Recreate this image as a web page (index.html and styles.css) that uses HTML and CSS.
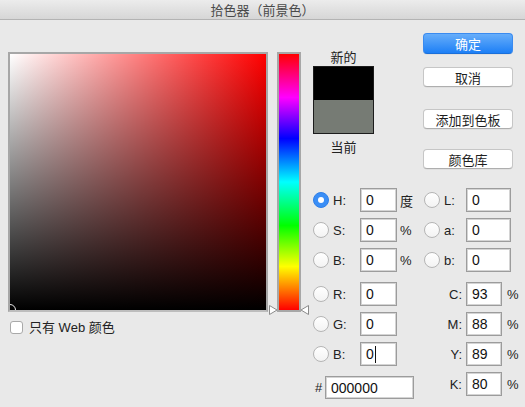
FILE: index.html
```html
<!DOCTYPE html>
<html lang="zh">
<head>
<meta charset="utf-8">
<title>拾色器（前景色）</title>
<link rel="stylesheet" href="styles.css">
</head>
<body>
<div class="window">
  <div class="titlebar">拾色器（前景色）</div>
  <div class="body">
    <div class="left">
      <div class="field"><span class="marker"></span></div>
      <div class="web"><span class="checkbox"></span><span>只有 Web 颜色</span></div>
    </div>
    <div class="hue">
      <div class="hue-bar"></div>
      <svg class="tri tri-l" width="9" height="10" viewBox="0 0 9 10"><path d="M0.5 0.5 L8 5 L0.5 9.5 Z" fill="#fff" stroke="#8a8a8a" stroke-width="1"/></svg>
      <svg class="tri tri-r" width="9" height="10" viewBox="0 0 9 10"><path d="M8.5 0.5 L1 5 L8.5 9.5 Z" fill="#fff" stroke="#8a8a8a" stroke-width="1"/></svg>
    </div>
    <div class="right">
      <div class="top">
        <div class="swatch-col">
          <div class="sw-label">新的</div>
          <div class="swatch"><div class="sw-new"></div><div class="sw-cur"></div></div>
          <div class="sw-label sw-label-cur">当前</div>
        </div>
        <div class="buttons">
          <button class="btn primary">确定</button>
          <button class="btn b-cancel">取消</button>
          <button class="btn b-add">添加到色板</button>
          <button class="btn b-lib">颜色库</button>
        </div>
      </div>
      <div class="fields-top">
        <span class="radio on"></span><span class="lbl">H:</span><span class="inp">0</span><span class="unit">度</span>
        <span class="radio"></span><span class="lbl">L:</span><span class="inp">0</span>
        <span class="radio"></span><span class="lbl">S:</span><span class="inp">0</span><span class="unit">%</span>
        <span class="radio"></span><span class="lbl">a:</span><span class="inp">0</span>
        <span class="radio"></span><span class="lbl">B:</span><span class="inp">0</span><span class="unit">%</span>
        <span class="radio"></span><span class="lbl">b:</span><span class="inp">0</span>
      </div>
      <div class="fields-bottom">
        <div class="rgb-col">
          <div class="rgb">
            <span class="radio"></span><span class="lbl">R:</span><span class="inp">0</span>
            <span class="radio"></span><span class="lbl">G:</span><span class="inp">0</span>
            <span class="radio"></span><span class="lbl">B:</span><span class="inp">0<span class="caret"></span></span>
          </div>
          <div class="hex"><span class="hash">#</span><span class="inp hex-inp">000000</span></div>
        </div>
        <div class="cmyk">
          <span class="clbl">C:</span><span class="inp">93</span><span class="pct">%</span>
          <span class="clbl">M:</span><span class="inp">88</span><span class="pct">%</span>
          <span class="clbl">Y:</span><span class="inp">89</span><span class="pct">%</span>
          <span class="clbl">K:</span><span class="inp">80</span><span class="pct">%</span>
        </div>
      </div>
    </div>
  </div>
</div>
</body>
</html>
```
FILE: styles.css
```css
* { box-sizing: border-box; }
html, body { margin: 0; padding: 0; }
body {
  font-family: "Liberation Sans", "Noto Sans CJK SC", sans-serif;
  font-size: 13px;
  color: #222;
  background: #e9e9e9;
}
.window {
  width: 525px;
  height: 407px;
  background: #e9e9e9;
  overflow: hidden;
}
.titlebar {
  height: 20px;
  line-height: 19px;
  text-align: center;
  font-family: "Noto Sans CJK SC", sans-serif;
  font-size: 13px;
  color: #4a4a4a;
  background: linear-gradient(#ececec, #d6d6d6);
  border-bottom: 1px solid #b3b3b3;
}
.body {
  display: flex;
  align-items: flex-start;
  padding: 13px 0 0 8px;
}
.left { margin-top: 19px; }
.field {
  position: relative;
  width: 260px;
  height: 260px;
  border: 2px solid #a7a7a7;
  border-bottom-color: #bdbdbd;
  overflow: hidden;
  background:
    linear-gradient(to top, #000, rgba(0,0,0,0)),
    linear-gradient(to right, #fff, #f00);
}
.marker {
  position: absolute;
  left: -6px;
  bottom: -6px;
  width: 12px;
  height: 12px;
  border-radius: 50%;
  border: 1px solid #e6e6e6;
}
.web {
  display: flex;
  align-items: center;
  gap: 6px;
  margin: 9px 0 0 2px;
  font-family: "Liberation Sans", "Noto Sans CJK SC", sans-serif;
  font-size: 13px;
  line-height: 13px;
}
.checkbox {
  width: 13px;
  height: 13px;
  background: #fff;
  border: 1px solid #a9a9a9;
  border-radius: 3px;
}
.hue {
  position: relative;
  margin: 19px 0 0 9px;
}
.hue-bar {
  width: 24px;
  height: 260px;
  border: 2px solid #a7a7a7;
  background: linear-gradient(to bottom, #f00, #f0f 17%, #00f 33%, #0ff 50%, #0f0 67%, #ff0 83%, #f00);
}
.tri { position: absolute; bottom: -3px; }
.tri-l { left: -8px; }
.tri-r { right: -8px; }
.right {
  margin-left: 12px;
  width: 205px;
}
.top {
  display: flex;
  height: 155px;
}
.swatch-col {
  width: 61px;
  padding-top: 16px;
  font-family: "Noto Sans CJK SC", sans-serif;
}
.sw-label {
  text-align: center;
  line-height: 16px;
  font-size: 13px;
}
.swatch {
  margin-top: 1px;
  height: 68px;
  border: 1px solid #1c1c1c;
  display: flex;
  flex-direction: column;
}
.sw-new { flex: 1; background: #000; }
.sw-cur { flex: 1; background: #767b74; }
.sw-label-cur { margin-top: 5px; }
.buttons {
  margin-left: 49px;
  display: flex;
  flex-direction: column;
}
.btn {
  width: 90px;
  height: 21px;
  padding: 0;
  font-family: "Noto Sans CJK SC", sans-serif;
  font-size: 13px;
  color: #1e1e1e;
  background: #fff;
  border: 1px solid #c6c6c6;
  border-bottom-color: #aeaeae;
  border-radius: 4px;
  box-shadow: 0 0.5px 0.5px rgba(0,0,0,0.08);
}
.btn.primary {
  color: #fff;
  background: linear-gradient(#67aefa, #1d7ff6);
  border-color: #3a8bf0;
  border-bottom-color: #1a6fd9;
}
.b-cancel { margin-top: 13px; height: 20px; }
.b-add { margin-top: 22px; height: 20px; }
.b-lib { margin-top: 20px; height: 20px; }

.radio {
  width: 16px;
  height: 16px;
  border-radius: 50%;
  background: linear-gradient(#ffffff, #f3f3f3);
  border: 1px solid #b5b5b5;
  align-self: center;
}
.radio.on {
  background: #3a8ef6;
  border-color: #2f7fe8;
  position: relative;
}
.radio.on::after {
  content: "";
  position: absolute;
  left: 4px;
  top: 4px;
  width: 6px;
  height: 6px;
  border-radius: 50%;
  background: #fff;
}
.lbl {
  align-self: center;
  padding-left: 4px;
  font-size: 13px;
}
.inp {
  display: flex;
  align-items: center;
  height: 24px;
  padding-left: 5px;
  background: #fff;
  border: 1px solid #9c9c9c;
  box-shadow: inset 0 0 0 1px #d4d4d4;
  font-size: 14px;
  color: #111;
}
.unit {
  align-self: center;
  padding-left: 3px;
  font-family: "Liberation Sans", "Noto Sans CJK SC", sans-serif;
  font-size: 13px;
}
.fields-top {
  display: grid;
  grid-template-columns: 16px 31px 37px 27px 16px 26px 45px;
  grid-auto-rows: 24px;
  row-gap: 6px;
}
.fields-bottom {
  display: flex;
  margin-top: 10px;
}
.rgb-col { width: 84px; flex-shrink: 0; }
.rgb {
  display: grid;
  grid-template-columns: 16px 31px 37px;
  grid-auto-rows: 24px;
  row-gap: 6px;
}
.caret {
  display: inline-block;
  width: 1px;
  height: 17px;
  background: #111;
  margin-left: 1px;
}
.hex {
  display: flex;
  align-items: center;
  width: max-content;
  margin-top: 10px;
}
.hash {
  margin-left: 2px;
  width: 10px;
  font-size: 13px;
  flex-shrink: 0;
}
.hex-inp {
  width: 89px;
  height: 23px;
  flex-shrink: 0;
}
.cmyk {
  display: grid;
  grid-template-columns: 65px 36px 20px;
  grid-auto-rows: 24px;
  row-gap: 6px;
  column-gap: 4px;
}
.cmyk .inp { grid-column: 2; }
.clbl {
  align-self: center;
  text-align: right;
  font-size: 13px;
}
.pct {
  align-self: center;
  padding-left: 1px;
  font-size: 13px;
}
```
